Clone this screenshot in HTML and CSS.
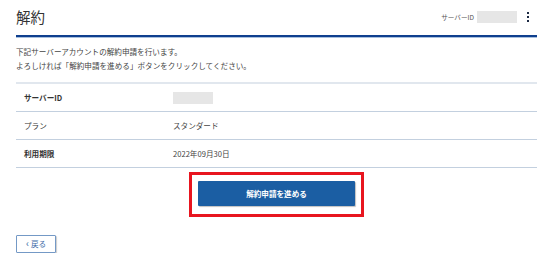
FILE: index.html
```html
<!DOCTYPE html>
<html lang="ja">
<head>
<meta charset="utf-8">
<link rel="stylesheet" href="styles.css">
</head>
<body>
<div class="page">
  <header class="head">
    <h1 class="title">解約</h1>
    <div class="head-right">
      <span class="sid-label">サーバーID</span>
      <span class="sid-box"></span>
      <span class="kebab"><i></i><i></i><i></i></span>
    </div>
  </header>
  <p class="desc">下記サーバーアカウントの解約申請を行います。<br>よろしければ「解約申請を進める」ボタンをクリックしてください。</p>
  <div class="table">
    <div class="row"><div class="th">サーバーID</div><div class="td"><span class="mask"></span></div></div>
    <div class="row"><div class="th plain">プラン</div><div class="td">スタンダード</div></div>
    <div class="row"><div class="th">利用期限</div><div class="td">2022年09月30日</div></div>
  </div>
  <div class="cta-wrap">
    <div class="highlight">
      <button class="cta">解約申請を進める</button>
    </div>
  </div>
  <button class="back"><span class="chev">‹</span>戻る</button>
</div>
</body>
</html>
```
FILE: styles.css
```css
* { box-sizing: border-box; }
html, body { margin: 0; padding: 0; background: #fff; }
body {
  font-family: "Noto Sans CJK JP", "Noto Sans", sans-serif;
  color: #333;
}
.page { padding: 0 13px 0 16px; }
.head {
  height: 37px;
  display: flex;
  align-items: center;
  justify-content: space-between;
  border-bottom: 2px solid #0f3f8e;
  box-shadow: 0 1px 0 #a9c0de;
  padding-bottom: 1px;
}
.title {
  margin: 0;
  font-size: 14.5px;
  font-weight: 400;
  color: #333;
  line-height: 1;
}
.head-right { display: flex; align-items: center; margin-top: -1px; }
.sid-label { font-size: 6.6px; color: #555; margin-right: 3px; }
.sid-box { width: 40px; height: 12px; background: #e6e6e6; }
.kebab {
  display: flex; flex-direction: column; gap: 2px;
  margin-left: 10px; margin-right: 8px;
}
.kebab i { display: block; width: 2px; height: 2px; background: #1c2a44; }
.desc {
  margin: 8px 0 0;
  font-size: 7.6px;
  line-height: 14px;
  color: #444;
}
.table {
  margin-top: 9px;
  border-top: 2px solid #e1e7ee;
}
.row {
  display: grid;
  grid-template-columns: 157px 1fr;
  height: 28px;
  align-items: center;
  border-bottom: 1px solid #c3d0df;
  font-size: 7.6px;
}
.th { padding-left: 8px; font-weight: 700; color: #333; }
.th.plain { font-weight: 400; }
.td { color: #444; display: flex; align-items: center; }
.mask { display: block; width: 40px; height: 12px; background: #e6e6e6; }
.cta-wrap { display: flex; justify-content: center; margin-top: 4px; }
.highlight {
  border: 3px solid #e8151f;
  padding: 6px 6px 8px;
}
.cta {
  display: block;
  width: 157px;
  height: 25px;
  border: 0;
  border-radius: 1px;
  background: #1b5ea3;
  color: #fff;
  font-family: inherit;
  font-size: 7.6px;
  font-weight: 700;
  box-shadow: 1px 1px 1px rgba(0,0,0,0.25);
  padding: 0;
}
.back {
  display: flex;
  align-items: center;
  justify-content: center;
  margin-top: 18px;
  width: 40px;
  height: 18px;
  padding: 0 0 1px;
  border: 1px solid #7499c6;
  border-radius: 1px;
  background: #fff;
  color: #3c6aa8;
  font-family: inherit;
  font-size: 7.6px;
  box-shadow: 1px 1px 1px rgba(0,0,0,0.2);
}
.chev { font-size: 10px; margin-right: 2px; line-height: 1; margin-top: -2px; }
```
